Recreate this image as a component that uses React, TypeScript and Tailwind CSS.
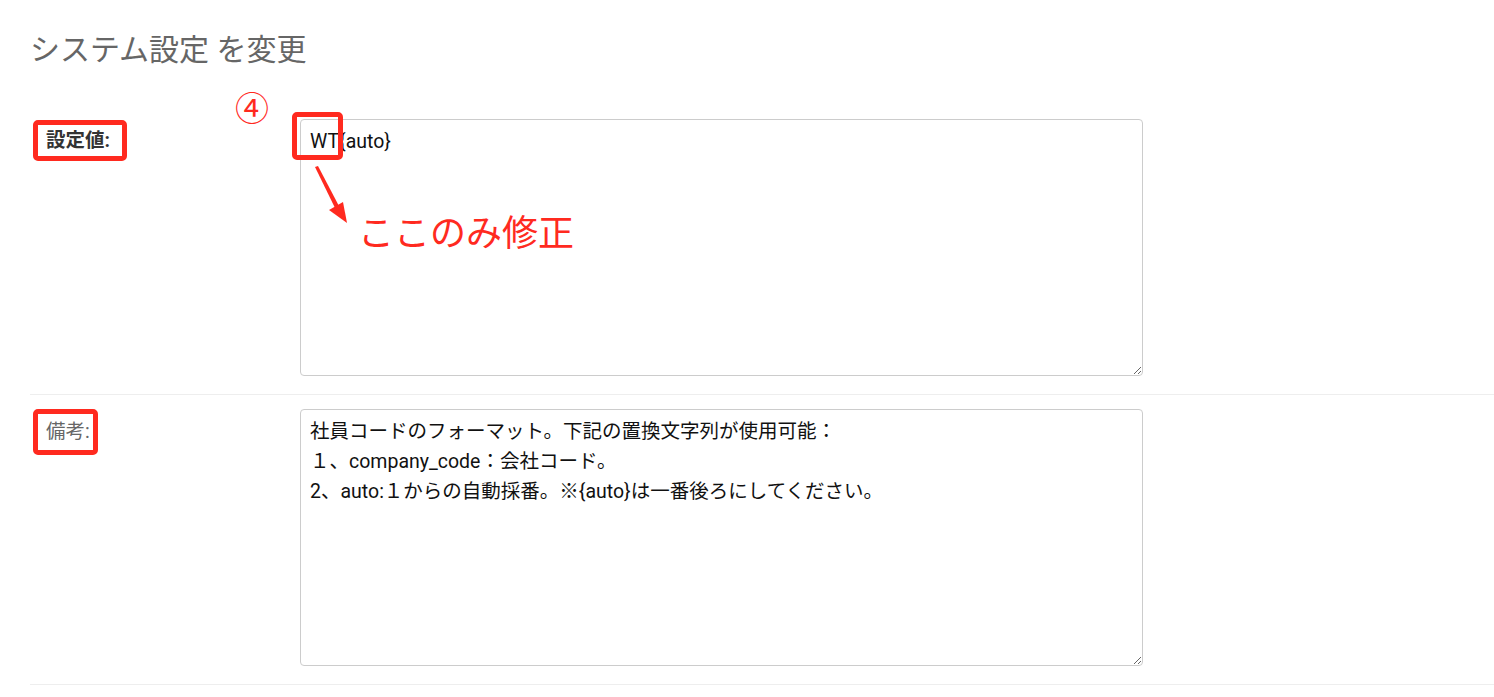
import React from 'react';

const jp = "font-['Roboto','Noto_Sans_CJK_JP',sans-serif]";

export default function App() {
  return (
    <div className={`min-h-screen bg-white pl-[30px] pt-[33px] ${jp}`}>
      <h1 className="text-[30px] leading-[34px] text-[#666] font-normal">システム設定 を変更</h1>

      <div className="mt-[37px]">
        {/* 設定値 */}
        <div className="relative flex border-b border-[#eee] pt-[15px] pb-[18px]">
          <div className="w-[270px] pl-[3px] pt-[1px]">
            <div className="inline-block rounded-[5px] border-[5px] border-[#ff2a1f] pl-[8px] pr-[12px] py-[4px] text-[19.5px] leading-[23px] font-bold text-[#333]">
              設定値:
            </div>
          </div>
          <textarea
            defaultValue="WT{auto}"
            className="w-[843px] h-[257px] rounded-[4px] border border-[#ccc] px-[9px] py-[7px] text-[19.5px] leading-[30px] text-[#111] outline-none"
          />

          {/* annotations */}
          <span className="absolute left-[205px] top-[-17px] text-[34px] leading-[40px] text-[#ff2a1f] font-['Noto_Sans_CJK_JP',sans-serif]">
            ④
          </span>
          <div className="absolute left-[262px] top-[8px] w-[51px] h-[48px] rounded-[5px] border-[5px] border-[#ff2a1f]" />
          <svg className="absolute left-[280px] top-[62px]" width="40" height="60" viewBox="0 0 40 60">
            <polygon points="5,1 8,0 30,42 26,44" fill="#ff2a1f" />
            <polygon points="37,57 19,44 33,36" fill="#ff2a1f" />
          </svg>
          <span className="absolute left-[328px] top-[104px] text-[36px] leading-[44px] text-[#ff2a1f] font-['Noto_Sans_CJK_JP',sans-serif]">
            ここのみ修正
          </span>
        </div>

        {/* 備考 */}
        <div className="flex border-b border-[#eee] pt-[14px] pb-[18px]">
          <div className="w-[270px] pl-[3px]">
            <div className="inline-block rounded-[5px] border-[5px] border-[#ff2a1f] pl-[8px] pr-[3px] py-[7px] text-[19.5px] leading-[22px] text-[#666]">
              備考:
            </div>
          </div>
          <textarea
            defaultValue={'社員コードのフォーマット。下記の置換文字列が使用可能：\n１、company_code：会社コード。\n2、auto:１からの自動採番。※{auto}は一番後ろにしてください。'}
            className="w-[843px] h-[257px] rounded-[4px] border border-[#ccc] px-[9px] py-[7px] text-[19.5px] leading-[30px] text-[#111] outline-none"
          />
        </div>
      </div>
    </div>
  );
}
